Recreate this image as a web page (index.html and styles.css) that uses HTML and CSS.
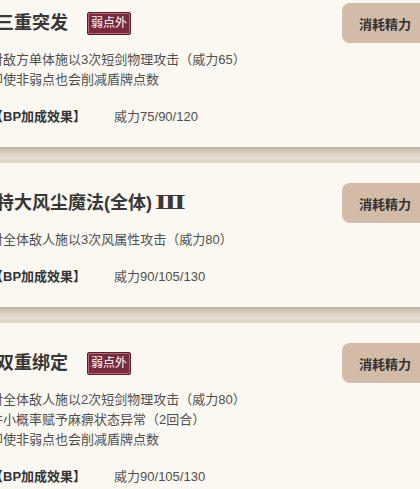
FILE: index.html
```html
<!DOCTYPE html>
<html lang="zh-CN">
<head>
    <meta charset="UTF-8">
    <meta name="viewport" content="width=device-width, initial-scale=1.0">
    <title>技能列表</title>
    <link rel="stylesheet" href="styles.css">
</head>
<body>

<div class="skill-list">
    <div class="skill-card">
        <div class="skill-head">
            <h2 class="skill-name">三重突发</h2>
            <span class="tag-weak">弱点外</span>
            <button class="cost-btn">消耗精力</button>
        </div>
        <p class="skill-desc">对敌方单体施以3次短剑物理攻击（威力65）<br>即使非弱点也会削减盾牌点数</p>
        <div class="bp-row">
            <span class="bp-label">【BP加成效果】</span>
            <span class="bp-value">威力75/90/120</span>
        </div>
    </div>

    <div class="skill-card">
        <div class="skill-head">
            <h2 class="skill-name">特大风尘魔法(全体)<span class="roman">Ⅲ</span></h2>
            <button class="cost-btn">消耗精力</button>
        </div>
        <p class="skill-desc">对全体敌人施以3次风属性攻击（威力80）</p>
        <div class="bp-row">
            <span class="bp-label">【BP加成效果】</span>
            <span class="bp-value">威力90/105/130</span>
        </div>
    </div>

    <div class="skill-card">
        <div class="skill-head">
            <h2 class="skill-name">双重绑定</h2>
            <span class="tag-weak">弱点外</span>
            <button class="cost-btn">消耗精力</button>
        </div>
        <p class="skill-desc">对全体敌人施以2次短剑物理攻击（威力80）<br>并小概率赋予麻痹状态异常（2回合）<br>即使非弱点也会削减盾牌点数</p>
        <div class="bp-row">
            <span class="bp-label">【BP加成效果】</span>
            <span class="bp-value">威力90/105/130</span>
        </div>
    </div>
</div>

</body>
</html>
```

FILE: styles.css
```css
body {
    margin: 0;
    padding: 0;
    background-color: #e4dccf;
    font-family: "Liberation Sans", "Noto Sans CJK SC", sans-serif;
    color: #333;
    overflow: hidden;
    text-spacing-trim: space-all;
}
.skill-list {
    display: flex;
    flex-direction: column;
    gap: 16px;
    margin: -17px -28px 0 -30px;
}
.skill-card {
    background-color: #fbf8f1;
    padding: 20px;
    box-shadow: 0 3px 7px rgba(90, 70, 40, 0.35);
}
.skill-head {
    display: flex;
    align-items: center;
    height: 40px;
}
.skill-name {
    margin: 0 0 0 6px;
    font-size: 18px;
    font-weight: bold;
    line-height: 24px;
    color: #383838;
}
.roman {
    display: inline-block;
    margin-left: 3px;
    font-family: "DejaVu Serif", serif;
    transform: scaleX(1.4);
    transform-origin: left center;
}
.tag-weak {
    margin-left: 19px;
    padding: 3px 3px;
    font-size: 12px;
    line-height: 15px;
    color: #fff;
    background-color: #7a2b3b;
    border: 1px solid #5c1c2a;
    border-radius: 2px;
    box-shadow: inset 0 0 0 1px #b8667a;
}
.cost-btn {
    margin-left: auto;
    height: 40px;
    padding: 0 17px;
    border: none;
    border-radius: 8px;
    background-color: #d2bba7;
    color: #333;
    font-family: inherit;
    font-size: 13px;
    font-weight: bold;
}
.skill-desc {
    margin: 7px 0 0;
    font-size: 13px;
    line-height: 20px;
    color: #4f4f4f;
}
.bp-row {
    display: flex;
    gap: 28px;
    margin-top: 17px;
    font-size: 13px;
    line-height: 20px;
}
.bp-label {
    font-weight: bold;
    color: #333;
}
.bp-value {
    color: #4f4f4f;
}
```
